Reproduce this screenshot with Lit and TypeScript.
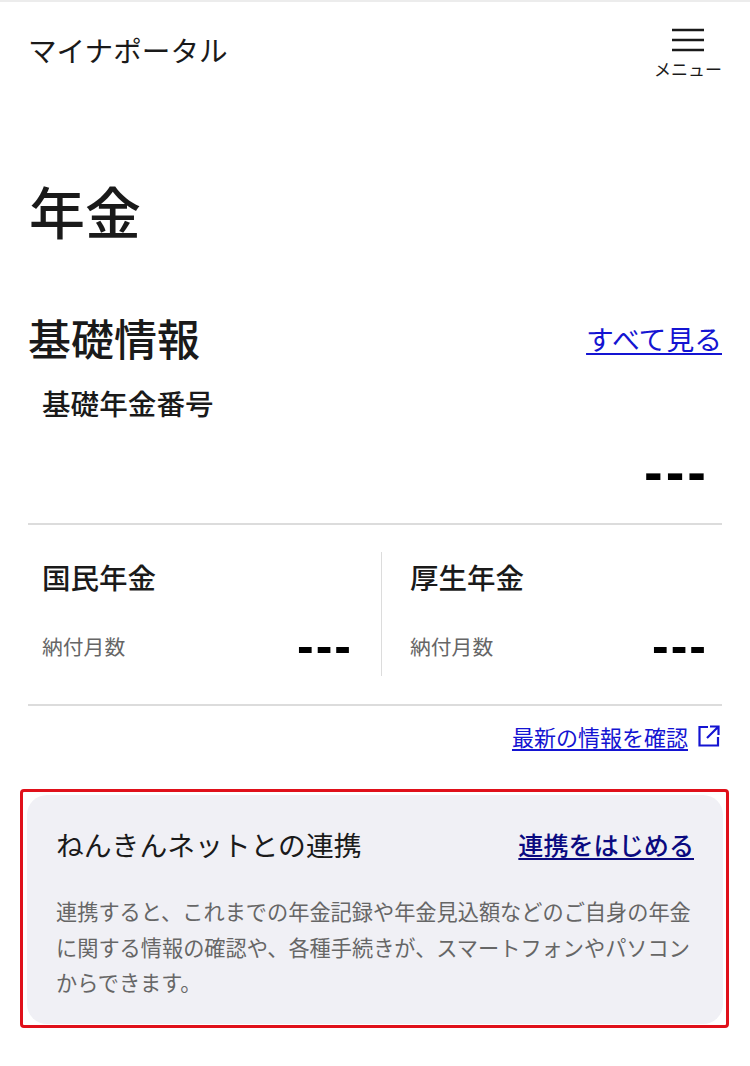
import { LitElement, html, css } from "lit";
import { customElement } from "lit/decorators.js";

@customElement("app-root")
export class AppRoot extends LitElement {
  static styles = css`
    :host {
      display: block;
      height: 1066px;
      overflow: hidden;
      background: #fff;
      color: #1a1a1a;
      font-family: "Noto Sans CJK JP", "Noto Sans", sans-serif;
      border-top: 2px solid #ececec;
      box-sizing: border-box;
    }
    a {
      color: #1414d2;
      text-decoration: underline;
      text-underline-offset: 3px;
    }
    .header {
      display: flex;
      justify-content: space-between;
      padding: 24px 28px 0 28px;
      height: 107px;
      box-sizing: border-box;
    }
    .site-name {
      font-size: 28.6px;
      line-height: 48px;
    }
    .menu {
      display: flex;
      flex-direction: column;
      align-items: center;
      width: 68px;
      padding-top: 2px;
    }
    .menu svg {
      display: block;
    }
    .menu span {
      font-size: 17px;
      line-height: 22px;
      margin-top: 6px;
      white-space: nowrap;
    }
    .page {
      padding: 0 28px;
    }
    h1 {
      margin: 0;
      font-size: 56px;
      font-weight: 500;
      line-height: 82px;
      padding: 60px 0 0 1px;
    }
    .section-head {
      display: flex;
      justify-content: space-between;
      align-items: center;
      margin-top: 55px;
      height: 62px;
    }
    h2 {
      margin: 0;
      font-size: 43px;
      font-weight: 500;
      line-height: 62px;
    }
    .see-all {
      font-size: 27.8px;
      padding-top: 2px;
    }
    .basic {
      padding: 14px 13px 0 14px;
      height: 157px;
      border-bottom: 2px solid #dcdcdc;
      box-sizing: border-box;
    }
    .basic .label {
      font-size: 28.6px;
      font-weight: 500;
      line-height: 42px;
    }
    .dashes {
      font-family: "Liberation Sans", sans-serif;
      font-weight: 700;
      color: #000;
      line-height: 1;
    }
    .basic .dashes {
      font-size: 56px;
      letter-spacing: 3px;
      text-align: right;
      margin-top: 20px;
    }
    .pensions {
      display: grid;
      grid-template-columns: 353px 1fr;
      padding: 27px 0 28px;
      border-bottom: 2px solid #dcdcdc;
    }
    .pension {
      height: 124px;
      padding: 0 28px 0 14px;
      box-sizing: border-box;
    }
    .pension + .pension {
      border-left: 1px solid #dcdcdc;
      padding: 0 14px 0 28px;
    }
    .pension h3 {
      margin: 0;
      font-size: 28.5px;
      font-weight: 500;
      line-height: 50px;
    }
    .row {
      display: flex;
      justify-content: space-between;
      align-items: center;
      margin-top: 24px;
      height: 40px;
    }
    .row .name {
      font-size: 20.8px;
      color: #666;
    }
    .row .dashes {
      font-size: 50px;
      letter-spacing: 2px;
    }
    .latest {
      display: flex;
      justify-content: flex-end;
      align-items: center;
      gap: 10px;
      height: 60px;
      padding-right: 2px;
    }
    .latest a {
      font-size: 22px;
    }
    .latest a,
    .latest svg {
      display: block;
    }
    .frame {
      margin: 23px -7px 0 -8px;
      border: 3px solid #e0101a;
      border-radius: 4px;
      padding: 3px 3px 0 4px;
      height: 239px;
      box-sizing: border-box;
    }
    .card {
      background: #f0f0f5;
      border-radius: 20px;
      height: 229px;
      padding: 28px 29px 0 29px;
      box-sizing: border-box;
    }
    .card-head {
      display: flex;
      justify-content: space-between;
      align-items: center;
      height: 42px;
    }
    .card-title {
      font-size: 27.8px;
    }
    .card-head a {
      font-size: 25.1px;
      font-weight: 500;
      color: #0a0a80;
    }
    .card p {
      margin: 28px 0 0;
      font-size: 21.2px;
      line-height: 35.5px;
      color: #666;
    }
  `;

  private pension(name: string) {
    return html`
      <div class="pension">
        <h3>${name}</h3>
        <div class="row">
          <span class="name">納付月数</span>
          <span class="dashes">---</span>
        </div>
      </div>
    `;
  }

  render() {
    return html`
      <header class="header">
        <div class="site-name">マイナポータル</div>
        <div class="menu">
          <svg width="32" height="24" viewBox="0 0 32 24" fill="none" stroke="#1a1a1a" stroke-width="2.4">
            <path d="M0 2h32M0 12h32M0 22h32" />
          </svg>
          <span>メニュー</span>
        </div>
      </header>
      <main class="page">
        <h1>年金</h1>
        <div class="section-head">
          <h2>基礎情報</h2>
          <a class="see-all" href="#">すべて見る</a>
        </div>
        <div class="basic">
          <div class="label">基礎年金番号</div>
          <div class="dashes">---</div>
        </div>
        <div class="pensions">
          ${this.pension("国民年金")} ${this.pension("厚生年金")}
        </div>
        <div class="latest">
          <a href="#">最新の情報を確認</a>
          <svg width="22" height="22" viewBox="0 0 22 22" fill="none" stroke="#1414d2" stroke-width="2.2">
            <path d="M10 2H1.500v18.500h18.500V12M12 1.500h8.500V10M20 2 9 13" />
          </svg>
        </div>
        <section class="frame">
          <div class="card">
            <div class="card-head">
              <span class="card-title">ねんきんネットとの連携</span>
              <a href="#">連携をはじめる</a>
            </div>
            <p>
              連携すると、これまでの年金記録や年金見込額などのご自身の年金に関する情報の確認や、各種手続きが、スマートフォンやパソコンからできます。
            </p>
          </div>
        </section>
      </main>
    `;
  }
}
